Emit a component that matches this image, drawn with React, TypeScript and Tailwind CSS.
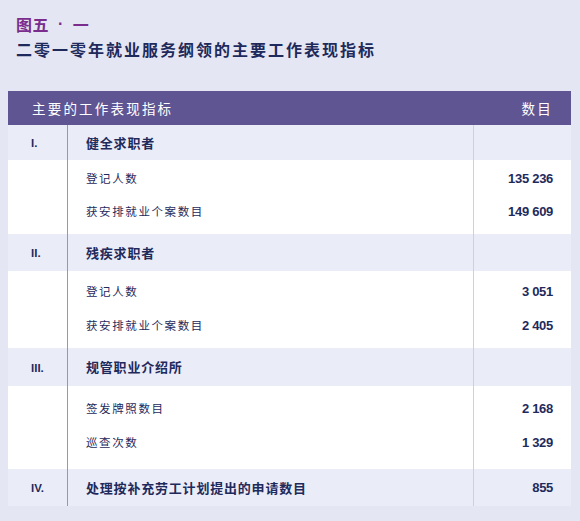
const cjk = "font-['Noto_Sans_CJK_SC','Noto_Sans',sans-serif]";
const num = "font-['Liberation_Sans',sans-serif]";

type Section = {
  num: string;
  title: string;
  value?: string;
  bandH: string;
  body?: string;
  rowH?: string;
  items: { label: string; value: string }[];
};

const sections: Section[] = [
  {
    num: "I.",
    title: "健全求职者",
    bandH: "h-[35px]",
    body: "pt-[2px] pb-[6px]",
    rowH: "h-[33px]",
    items: [
      { label: "登记人数", value: "135 236" },
      { label: "获安排就业个案数目", value: "149 609" },
    ],
  },
  {
    num: "II.",
    title: "残疾求职者",
    bandH: "h-[37px]",
    body: "pt-[4px] pb-[6px]",
    rowH: "h-[33.5px]",
    items: [
      { label: "登记人数", value: "3 051" },
      { label: "获安排就业个案数目", value: "2 405" },
    ],
  },
  {
    num: "III.",
    title: "规管职业介绍所",
    bandH: "h-[38px]",
    body: "pt-[6px] pb-[9px]",
    rowH: "h-[34px]",
    items: [
      { label: "签发牌照数目", value: "2 168" },
      { label: "巡查次数", value: "1 329" },
    ],
  },
  {
    num: "IV.",
    title: "处理按补充劳工计划提出的申请数目",
    value: "855",
    bandH: "h-[37px]",
    items: [],
  },
];

const grid = "grid grid-cols-[59px_406px_98px]";

export default function App() {
  return (
    <div className="w-[580px] h-[521px] bg-[#e4e7f3] overflow-hidden">
      <div className={`${cjk} px-4 pt-[14px]`}>
        <div className="flex items-center text-[16px] leading-[20px] font-bold text-[#7b2d8e] tracking-[0.5px]">
          <span>图五</span>
          <span className={`${num} mx-[9px]`}>·</span>
          <span>一</span>
        </div>
        <div className="mt-[5px] text-[16px] leading-[20px] font-bold text-[#1f2a5c] tracking-[2px]">
          二零一零年就业服务纲领的主要工作表现指标
        </div>
      </div>

      <div className="ml-2 mt-[32px] w-[563px]">
        <div className={`${cjk} h-[34px] bg-[#5f5592] flex items-center justify-between pl-6 pr-[18px] text-white text-[13.5px] tracking-[2.2px]`}>
          <span>主要的工作表现指标</span>
          <span>数目</span>
        </div>

        {sections.map((s) => (
          <div key={s.num}>
            <div className={`${grid} ${s.bandH} bg-[#eaedf8] text-[#1f2a5c]`}>
              <div className={`flex items-center pl-[23px] pt-[3px] text-[11.5px] font-bold ${num}`}>
                {s.num}
              </div>
              <div className={`${cjk} border-l border-[#8a9bc0] flex items-center pl-[18px] text-[13px] font-bold tracking-[0.8px]`}>
                {s.title}
              </div>
              <div className={`border-l border-[#c3d4ea] flex items-center justify-end pr-[18px] text-[13px] font-bold tracking-[-0.3px] ${num}`}>
                {s.value}
              </div>
            </div>
            {s.items.length > 0 && (
              <div className={`${grid} bg-white text-[#1f2a5c]`}>
                <div />
                <div className={`${cjk} ${s.body} border-l border-[#8a9bc0] pl-[18px] text-[11.5px] tracking-[1.6px]`}>
                  {s.items.map((it) => (
                    <div key={it.label} className={`${s.rowH} flex items-center`}>
                      {it.label}
                    </div>
                  ))}
                </div>
                <div className={`${s.body} ${num} border-l border-[#c3d4ea] pr-[18px] text-[13px] font-bold tracking-[-0.3px]`}>
                  {s.items.map((it) => (
                    <div key={it.label} className={`${s.rowH} flex items-center justify-end`}>
                      {it.value}
                    </div>
                  ))}
                </div>
              </div>
            )}
          </div>
        ))}
      </div>
    </div>
  );
}
